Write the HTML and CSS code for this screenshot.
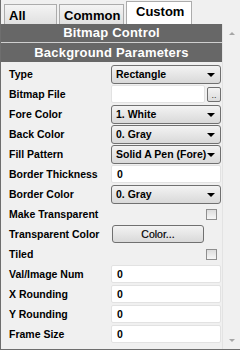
FILE: index.html
```html
<!DOCTYPE html>
<html lang="en">
  <head>
    <meta charset="UTF-8" />
    <title>Bitmap Control - Properties</title>
    <link rel="stylesheet" href="styles.css">
  </head>
  <body>
    <div class="window">
      <div class="tabs">
        <div class="tab">All</div>
        <div class="tab">Common</div>
        <div class="tab active">Custom</div>
      </div>
      <div class="panel">
        <div class="content">
          <div class="header">Bitmap Control</div>
          <div class="header sub">Background Parameters</div>
          <div class="rows">
            <div class="row">
              <span class="label">Type</span>
              <div class="select">Rectangle</div>
            </div>
            <div class="row">
              <span class="label">Bitmap File</span>
              <div class="file">
                <div class="input"></div>
                <div class="browse">..</div>
              </div>
            </div>
            <div class="row">
              <span class="label">Fore Color</span>
              <div class="select">1. White</div>
            </div>
            <div class="row">
              <span class="label">Back Color</span>
              <div class="select">0. Gray</div>
            </div>
            <div class="row">
              <span class="label">Fill Pattern</span>
              <div class="select">Solid A Pen (Fore)</div>
            </div>
            <div class="row">
              <span class="label">Border Thickness</span>
              <div class="input">0</div>
            </div>
            <div class="row">
              <span class="label">Border Color</span>
              <div class="select">0. Gray</div>
            </div>
            <div class="row">
              <span class="label">Make Transparent</span>
              <div class="check-cell"><span class="checkbox"></span></div>
            </div>
            <div class="row">
              <span class="label">Transparent Color</span>
              <div class="btn-cell"><div class="button">Color...</div></div>
            </div>
            <div class="row">
              <span class="label">Tiled</span>
              <div class="check-cell"><span class="checkbox"></span></div>
            </div>
            <div class="row">
              <span class="label">Val/Image Num</span>
              <div class="input">0</div>
            </div>
            <div class="row">
              <span class="label">X Rounding</span>
              <div class="input">0</div>
            </div>
            <div class="row">
              <span class="label">Y Rounding</span>
              <div class="input">0</div>
            </div>
            <div class="row">
              <span class="label">Frame Size</span>
              <div class="input">0</div>
            </div>
          </div>
        </div>
        <div class="scrollbar">
          <span class="arrow up"></span>
          <span class="arrow down"></span>
        </div>
      </div>
    </div>
  </body>
</html>
```

FILE: styles.css
```css
body {
  margin: 0;
  font-family: "Liberation Sans", Arial, sans-serif;
  background-color: #f0f0f0;
}

.window {
  width: 240px;
  height: 350px;
  box-sizing: border-box;
  border-left: 1px solid #6e6e6e;
  border-bottom: 1px solid #6e6e6e;
  background-color: #f0f0f0;
  display: flex;
  flex-direction: column;
  overflow: hidden;
}

/* Tab strip */
.tabs {
  height: 24px;
  display: flex;
  align-items: flex-end;
  padding-left: 3px;
  gap: 2px;
}

.tab {
  height: 20px;
  box-sizing: border-box;
  padding: 3px 0 0 0;
  border: 1px solid #acacac;
  border-bottom: none;
  background: linear-gradient(#f4f4f4, #e0e0e0);
  font-size: 13px;
  font-weight: bold;
  color: #000;
  text-align: left;
}

.tab:nth-child(1) {
  width: 53px;
  padding-left: 4px;
}

.tab:nth-child(2) {
  width: 65px;
  padding-left: 4px;
}

.tab.active {
  width: 66px;
  height: 23px;
  padding: 2px 0 0 9px;
  background: #fff;
}

/* Panel */
.panel {
  flex: 1;
  display: flex;
}

.content {
  width: 221px;
}

.header {
  height: 18px;
  background-color: #676767;
  color: #fff;
  font-size: 13px;
  font-weight: bold;
  text-align: center;
  line-height: 18px;
  letter-spacing: 0.2px;
}

.header.sub {
  height: 19px;
  line-height: 19px;
  border-top: 1px solid #cfcfcf;
}

.rows {
  padding-top: 2px;
}

.row {
  height: 20px;
  display: grid;
  grid-template-columns: 102px 110px;
  align-items: center;
  padding-left: 8px;
}

.label {
  font-size: 10.5px;
  font-weight: bold;
  color: #000;
  white-space: nowrap;
}

.select,
.input,
.button {
  font-size: 10.5px;
  font-weight: bold;
  color: #000;
  box-sizing: border-box;
  white-space: nowrap;
}

.select {
  position: relative;
  height: 19px;
  line-height: 17px;
  padding-left: 4px;
  border: 1px solid #707070;
  border-radius: 3px;
  background: linear-gradient(#f3f3f3, #e6e6e6 50%, #d9d9d9);
}

/* dropdown arrow */
.select::after {
  content: "";
  position: absolute;
  right: 5px;
  top: 7px;
  border-left: 4px solid transparent;
  border-right: 4px solid transparent;
  border-top: 4px solid #000;
}

.input {
  height: 18px;
  line-height: 16px;
  padding-left: 5px;
  border: 1px solid #e2e2e2;
  border-radius: 2px;
  background-color: #fff;
}

.file {
  display: flex;
  align-items: center;
  gap: 2px;
}

.file .input {
  width: 94px;
}

.browse {
  width: 14px;
  height: 15px;
  box-sizing: border-box;
  border: 1px solid #707070;
  border-radius: 2px;
  background: linear-gradient(#f3f3f3, #dcdcdc);
  font-size: 9px;
  line-height: 14px;
  text-align: center;
  color: #333;
}

.check-cell {
  display: flex;
  justify-content: flex-end;
  padding-right: 4px;
}

.checkbox {
  width: 11px;
  height: 11px;
  box-sizing: border-box;
  border: 1px solid #8e8e8e;
  background: linear-gradient(#dcdcdc, #f6f6f6);
}

.btn-cell {
  padding-left: 1px;
}

.button {
  width: 92px;
  height: 18px;
  line-height: 16px;
  text-align: center;
  border: 1px solid #707070;
  border-radius: 3px;
  background: linear-gradient(#f3f3f3, #e6e6e6 50%, #d9d9d9);
  font-weight: normal;
  -webkit-text-stroke: 0.2px #000;
}

/* Scrollbar */
.scrollbar {
  flex: 1;
  display: flex;
  flex-direction: column;
  justify-content: space-between;
  align-items: center;
  border-left: 1px solid #e3e3e3;
  padding: 8px 0 7px 0;
}

.arrow {
  width: 0;
  height: 0;
  border-left: 3px solid transparent;
  border-right: 3px solid transparent;
}

.arrow.up {
  border-bottom: 3px solid #a6a6a6;
}

.arrow.down {
  border-top: 3px solid #a6a6a6;
}
```
